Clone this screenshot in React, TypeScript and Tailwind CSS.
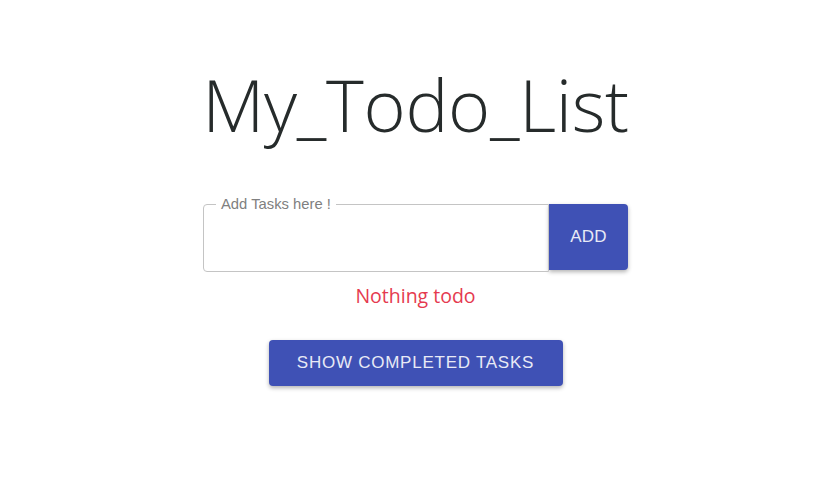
export default function App() {
  return (
    <div className="min-h-[502px] w-full bg-white flex flex-col items-center font-['Liberation_Sans',Arial,sans-serif]">
      <h1 className="mt-[54px] h-[100px] leading-[100px] text-[72px] font-light text-[#262b2b] font-['Open_Sans',sans-serif] tracking-[-0.3px]">
        My_Todo_List
      </h1>

      <div className="mt-[50px] flex items-start">
        <div className="relative w-[346px] h-[68px] border border-[#c4c4c4] rounded-l-[4px]">
          <span className="absolute left-[12px] -top-[9px] px-[5px] bg-white text-[14.8px] leading-[16px] text-[#808080]">
            Add Tasks here !
          </span>
        </div>
        <button className="w-[79px] h-[66px] bg-[#3f51b5] text-[#e8eaf6] text-[17px] tracking-[0.2px] rounded-r-[4px] shadow-[0_2px_4px_rgba(0,0,0,0.3)]">
          ADD
        </button>
      </div>

      <p className="mt-[9px] text-[19.5px] text-[#e53a4f] font-['Open_Sans',sans-serif]">
        Nothing todo
      </p>

      <button className="mt-[30px] w-[294px] h-[46px] bg-[#3f51b5] text-[#e8eaf6] text-[17px] tracking-[0.75px] rounded-[4px] shadow-[0_2px_4px_rgba(0,0,0,0.3)] pb-[2px]">
        SHOW COMPLETED TASKS
      </button>
    </div>
  );
}
